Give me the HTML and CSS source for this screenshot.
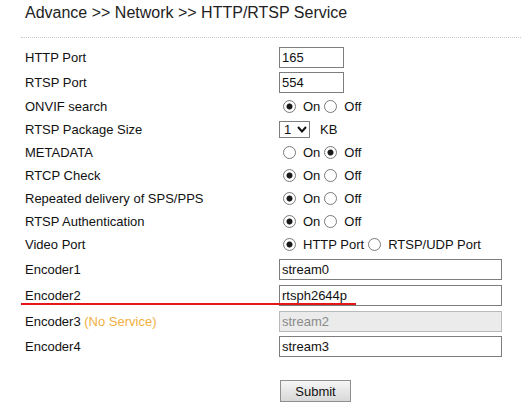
FILE: index.html
```html
<!DOCTYPE html>
<html>
<head>
<meta charset="utf-8">
<link rel="stylesheet" href="styles.css">
</head>
<body>
<div class="page">
  <h1 class="title">Advance &gt;&gt; Network &gt;&gt; HTTP/RTSP Service</h1>
  <div class="sep"></div>
  <div class="form">
    <div class="row h26"><span class="label">HTTP Port</span><div class="field"><input class="text port" type="text" value="165"></div></div>
    <div class="row h25"><span class="label">RTSP Port</span><div class="field"><input class="text port" type="text" value="554"></div></div>
    <div class="row h23"><span class="label">ONVIF search</span><div class="field"><label class="opt"><input class="radio" type="radio" name="onvif" checked>On</label><label class="opt"><input class="radio" type="radio" name="onvif">Off</label></div></div>
    <div class="row h23"><span class="label">RTSP Package Size</span><div class="field"><span class="select"><select><option>1</option></select><svg class="chev" width="10" height="7" viewBox="0 0 10 7"><polyline points="1,1 5,5.5 9,1" fill="none" stroke="#111" stroke-width="2"/></svg></span><span class="unit">KB</span></div></div>
    <div class="row h23"><span class="label">METADATA</span><div class="field"><label class="opt"><input class="radio" type="radio" name="meta">On</label><label class="opt"><input class="radio" type="radio" name="meta" checked>Off</label></div></div>
    <div class="row h23"><span class="label">RTCP Check</span><div class="field"><label class="opt"><input class="radio" type="radio" name="rtcp" checked>On</label><label class="opt"><input class="radio" type="radio" name="rtcp">Off</label></div></div>
    <div class="row h23"><span class="label">Repeated delivery of SPS/PPS</span><div class="field"><label class="opt"><input class="radio" type="radio" name="sps" checked>On</label><label class="opt"><input class="radio" type="radio" name="sps">Off</label></div></div>
    <div class="row h23"><span class="label">RTSP Authentication</span><div class="field"><label class="opt"><input class="radio" type="radio" name="auth" checked>On</label><label class="opt"><input class="radio" type="radio" name="auth">Off</label></div></div>
    <div class="row h23"><span class="label">Video Port</span><div class="field"><label class="opt"><input class="radio" type="radio" name="vport" checked>HTTP Port</label><label class="opt"><input class="radio" type="radio" name="vport">RTSP/UDP Port</label></div></div>
    <div class="row h26"><span class="label">Encoder1</span><div class="field"><input class="text wide" type="text" value="stream0"></div></div>
    <div class="row h26"><span class="label">Encoder2</span><div class="field"><input class="text wide" type="text" value="rtsph2644p"></div></div>
    <div class="row h26"><span class="label">Encoder3 <span class="warn">(No Service)</span></span><div class="field"><input class="text wide" type="text" value="stream2" disabled></div></div>
    <div class="row h24"><span class="label">Encoder4</span><div class="field"><input class="text wide" type="text" value="stream3"></div></div>
  </div>
  <div class="actions"><button class="submit" type="button">Submit</button></div>
  <div class="annot"></div>
</div>
</body>
</html>
```

FILE: styles.css
```css
html, body {
  margin: 0;
  padding: 0;
  background: #fff;
}
body {
  font-family: "Liberation Sans", Arial, sans-serif;
  font-size: 13px;
  color: #111;
}
.page {
  position: relative;
  width: 521px;
  height: 416px;
  padding-left: 21px;
  box-sizing: border-box;
  overflow: hidden;
}
.title {
  margin: 4px 0 0 4px;
  font-size: 16px;
  font-weight: normal;
  line-height: 18px;
  color: #222;
}
.sep {
  margin-top: 15px;
  border-top: 1px dotted #c8c8c8;
}
.form {
  margin-top: 6px;
  padding-left: 4px;
}
.row {
  display: grid;
  grid-template-columns: 254px 1fr;
  align-items: center;
}
.h23 { height: 23px; }
.h24 { height: 24px; }
.h25 { height: 25px; }
.h26 { height: 26px; }
.label {
  white-space: nowrap;
}
.warn {
  color: #f2b03e;
}
.field {
  display: flex;
  align-items: center;
  white-space: nowrap;
}
.text {
  box-sizing: border-box;
  height: 21px;
  margin: 0;
  padding: 0 2px;
  border: 1px solid #7d7d7d;
  font-family: "Liberation Sans", Arial, sans-serif;
  font-size: 13px;
  color: #111;
  background: #fff;
  outline: none;
}
.port { width: 65px; }
.wide { width: 223px; }
.text:disabled {
  background: #ebebeb;
  border-color: #b9b9b9;
  color: #8a8a8a;
}
.opt {
  display: flex;
  align-items: center;
}
.radio {
  appearance: none;
  -webkit-appearance: none;
  box-sizing: border-box;
  width: 13px;
  height: 13px;
  margin: 0 7px 0 4px;
  border: 1px solid #7a7a7a;
  border-radius: 50%;
  background: #fff;
}
.opt:first-child .radio {
  margin-left: 4px;
}
.radio:checked {
  background: radial-gradient(circle, #1a1a1a 0 2.6px, #fff 3.4px);
}
.select {
  position: relative;
  display: inline-block;
  height: 17px;
}
.select select {
  appearance: none;
  -webkit-appearance: none;
  box-sizing: border-box;
  width: 31px;
  height: 17px;
  margin: 0;
  padding: 0 0 0 4px;
  border: 1px solid #7d7d7d;
  border-radius: 0;
  background: #fff;
  font-family: "Liberation Sans", Arial, sans-serif;
  font-size: 13px;
  color: #111;
}
.chev {
  position: absolute;
  right: 3px;
  top: 5px;
  pointer-events: none;
}
.unit {
  margin-left: 10px;
}
.actions {
  margin-top: 22px;
  padding-left: 259px;
}
.submit {
  box-sizing: border-box;
  width: 71px;
  height: 22px;
  margin: 0;
  padding: 0;
  border: 1px solid #8e8e8e;
  background: linear-gradient(#f6f6f6, #e6e6e6 50%, #d8d8d8);
  font-family: "Liberation Sans", Arial, sans-serif;
  font-size: 13px;
  color: #111;
}
.annot {
  position: absolute;
  left: 21px;
  top: 303px;
  width: 335px;
  height: 2px;
  background: #e8141c;
}
```
